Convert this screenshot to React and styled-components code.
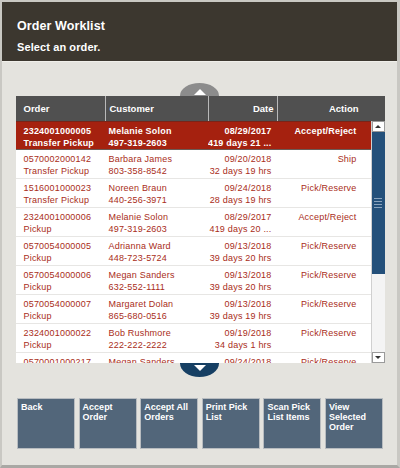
import React from "react";
import styled, { createGlobalStyle } from "styled-components";

const Global = createGlobalStyle`
  html, body { margin: 0; padding: 0; background: #e4e3de; }
  body { font-family: "Liberation Sans", Arial, sans-serif; }
`;

const Frame = styled.div`
  width: 400px;
  height: 468px;
  box-sizing: border-box;
  background: #e4e3de;
  border-top: 2px solid #c9c8c3;
  border-left: 2px solid #c9c8c3;
  border-right: 3px solid #c9c8c3;
  border-bottom: 3px solid #a9a8a4;
  display: flex;
  flex-direction: column;
  overflow: hidden;
`;

const Header = styled.div`
  background: #3c372f;
  height: 60px;
  box-sizing: border-box;
  padding: 16px 0 0 15px;
  color: #fff;
  border-bottom: 1px solid #f0efea;
`;

const Title = styled.div`
  font-size: 12.5px;
  font-weight: bold;
  line-height: 16px;
  letter-spacing: 0.1px;
`;

const Subtitle = styled.div`
  font-size: 11px;
  font-weight: bold;
  line-height: 14px;
  margin-top: 6px;
  letter-spacing: 0.1px;
`;

const Body = styled.div`
  flex: 1;
  display: flex;
  flex-direction: column;
  align-items: center;
  padding-top: 21px;
`;

const Tab = styled.div`
  width: 39px;
  height: ${(p) => (p.$up ? "13px" : "14px")};
  background: ${(p) => p.$bg};
  border-radius: ${(p) => (p.$up ? "20px 20px 0 0 / 13px 13px 0 0" : "0 0 20px 20px / 0 0 14px 14px")};
  display: flex;
  justify-content: center;
  align-items: center;
`;

const Triangle = styled.div`
  width: 0;
  height: 0;
  border-left: 6px solid transparent;
  border-right: 6px solid transparent;
  ${(p) => (p.$up ? "border-bottom: 6px solid #fff; margin-top: 4px;" : "border-top: 6px solid #fff; margin-bottom: 4px;")}
`;

const Table = styled.div`
  width: 369px;
  margin-left: 1px;
  display: flex;
  flex-direction: column;
`;

const HeadRow = styled.div`
  display: grid;
  grid-template-columns: 89px 103px 69px 1fr;
  height: 25px;
  background: #505050;
  color: #fff;
  font-size: 9.5px;
  font-weight: bold;
`;

const HeadCell = styled.div`
  display: flex;
  align-items: center;
  justify-content: ${(p) => (p.$right ? "flex-end" : "flex-start")};
  padding: ${(p) => p.$pad};
  border-left: ${(p) => (p.$first ? "none" : "1px solid #b9b9b9")};
`;

const BodyWrap = styled.div`
  display: flex;
  height: 242px;
  background: #fff;
`;

const Rows = styled.div`
  flex: 1;
  overflow: hidden;
`;

const Row = styled.div`
  display: grid;
  grid-template-columns: 89px 103px 69px 1fr;
  height: 29px;
  box-sizing: border-box;
  padding-top: 4px;
  font-size: 9px;
  line-height: 11px;
  background: ${(p) => (p.$sel ? "#a5210f" : "#fff")};
  color: ${(p) => (p.$sel ? "#fff" : "#a92d20")};
  font-weight: ${(p) => (p.$sel ? "bold" : "normal")};
  letter-spacing: 0.2px;
  border-bottom: ${(p) => (p.$sel ? "1px solid #6b5a55" : "1px solid #e7e6e4")};
  border-top: ${(p) => (p.$sel ? "1px solid #7a2418" : "none")};
`;

const Cell = styled.div`
  display: flex;
  flex-direction: column;
  align-items: ${(p) => (p.$right ? "flex-end" : "flex-start")};
  padding: ${(p) => p.$pad};
  white-space: nowrap;
  overflow: hidden;
`;

const Line = styled.div`
  margin-top: ${(p) => (p.$second ? "1px" : "0")};
`;

const Scrollbar = styled.div`
  width: 14px;
  display: flex;
  flex-direction: column;
  background: #f4f4f4;
  border-left: 1px solid #d0d0d0;
  box-sizing: border-box;
`;

const ScrollBtn = styled.div`
  height: 11px;
  background: #fff;
  border: 1px solid #9a9a9a;
  box-sizing: border-box;
  display: flex;
  align-items: center;
  justify-content: center;
`;

const SmallTri = styled.div`
  width: 0;
  height: 0;
  border-left: 3px solid transparent;
  border-right: 3px solid transparent;
  ${(p) => (p.$up ? "border-bottom: 3px solid #333;" : "border-top: 3px solid #333;")}
`;

const Thumb = styled.div`
  height: 142px;
  background: #24507a;
  display: flex;
  flex-direction: column;
  align-items: center;
  justify-content: center;
  gap: 2px;
`;

const Grip = styled.div`
  width: 8px;
  height: 1px;
  background: #8aa3bd;
`;

const Track = styled.div`
  flex: 1;
  background: #f4f4f4;
`;

const Buttons = styled.div`
  display: flex;
  gap: 3.6px;
  margin-top: 21px;
  margin-left: 1px;
`;

const ActionButton = styled.div`
  width: 58px;
  height: 51px;
  box-sizing: border-box;
  background: #52667a;
  border: 1px solid #b8bcc0;
  color: #fff;
  font-size: 9px;
  font-weight: bold;
  line-height: 10px;
  padding: 3px 3px;
`;

const rows = [
  ["2324001000005", "Transfer Pickup", "Melanie Solon", "497-319-2603", "08/29/2017", "419 days 21 ...", "Accept/Reject", true],
  ["0570002000142", "Transfer Pickup", "Barbara James", "803-358-8542", "09/20/2018", "32 days 19 hrs", "Ship"],
  ["1516001000023", "Transfer Pickup", "Noreen Braun", "440-256-3971", "09/24/2018", "28 days 19 hrs", "Pick/Reserve"],
  ["2324001000006", "Pickup", "Melanie Solon", "497-319-2603", "08/29/2017", "419 days 20 ...", "Accept/Reject"],
  ["0570054000005", "Pickup", "Adrianna Ward", "448-723-5724", "09/13/2018", "39 days 20 hrs", "Pick/Reserve"],
  ["0570054000006", "Pickup", "Megan Sanders", "632-552-1111", "09/13/2018", "39 days 20 hrs", "Pick/Reserve"],
  ["0570054000007", "Pickup", "Margaret Dolan", "865-680-0516", "09/13/2018", "39 days 19 hrs", "Pick/Reserve"],
  ["2324001000022", "Pickup", "Bob Rushmore", "222-222-2222", "09/19/2018", "34 days 1 hrs", "Pick/Reserve"],
  ["0570001000217", null, "Megan Sanders", null, "09/24/2018", null, "Pick/Reserve"],
];

const buttons = [
  ["Back"],
  ["Accept", "Order"],
  ["Accept All", "Orders"],
  ["Print Pick", "List"],
  ["Scan Pick", "List Items"],
  ["View", "Selected", "Order"],
];

export default function App() {
  return (
    <>
      <Global />
      <Frame>
        <Header>
          <Title>Order Worklist</Title>
          <Subtitle>Select an order.</Subtitle>
        </Header>
        <Body>
          <Tab $up $bg="#8c8c8c">
            <Triangle $up />
          </Tab>
          <Table>
            <HeadRow>
              <HeadCell $first $pad="0 0 0 8px">Order</HeadCell>
              <HeadCell $pad="0 0 0 4px">Customer</HeadCell>
              <HeadCell $right $pad="0 3px 0 0">Date</HeadCell>
              <HeadCell $right $pad="0 26px 0 0">Action</HeadCell>
            </HeadRow>
            <BodyWrap>
              <Rows>
                {rows.map((r, i) => (
                  <Row key={i} $sel={r[7]}>
                    <Cell $pad="0 0 0 8px">
                      <Line>{r[0]}</Line>
                      {r[1] && <Line $second>{r[1]}</Line>}
                    </Cell>
                    <Cell $pad="0 0 0 4px">
                      <Line>{r[2]}</Line>
                      {r[3] && <Line $second>{r[3]}</Line>}
                    </Cell>
                    <Cell $right $pad="0 5px 0 0">
                      <Line>{r[4]}</Line>
                      {r[5] && <Line $second>{r[5]}</Line>}
                    </Cell>
                    <Cell $right $pad="0 14px 0 0">
                      <Line>{r[6]}</Line>
                    </Cell>
                  </Row>
                ))}
              </Rows>
              <Scrollbar>
                <ScrollBtn>
                  <SmallTri $up />
                </ScrollBtn>
                <Thumb>
                  <Grip />
                  <Grip />
                  <Grip />
                  <Grip />
                </Thumb>
                <Track />
                <ScrollBtn>
                  <SmallTri />
                </ScrollBtn>
              </Scrollbar>
            </BodyWrap>
          </Table>
          <Tab $bg="#163f63">
            <Triangle />
          </Tab>
          <Buttons>
            {buttons.map((b, i) => (
              <ActionButton key={i}>
                {b.map((l, j) => (
                  <div key={j}>{l}</div>
                ))}
              </ActionButton>
            ))}
          </Buttons>
        </Body>
      </Frame>
    </>
  );
}
